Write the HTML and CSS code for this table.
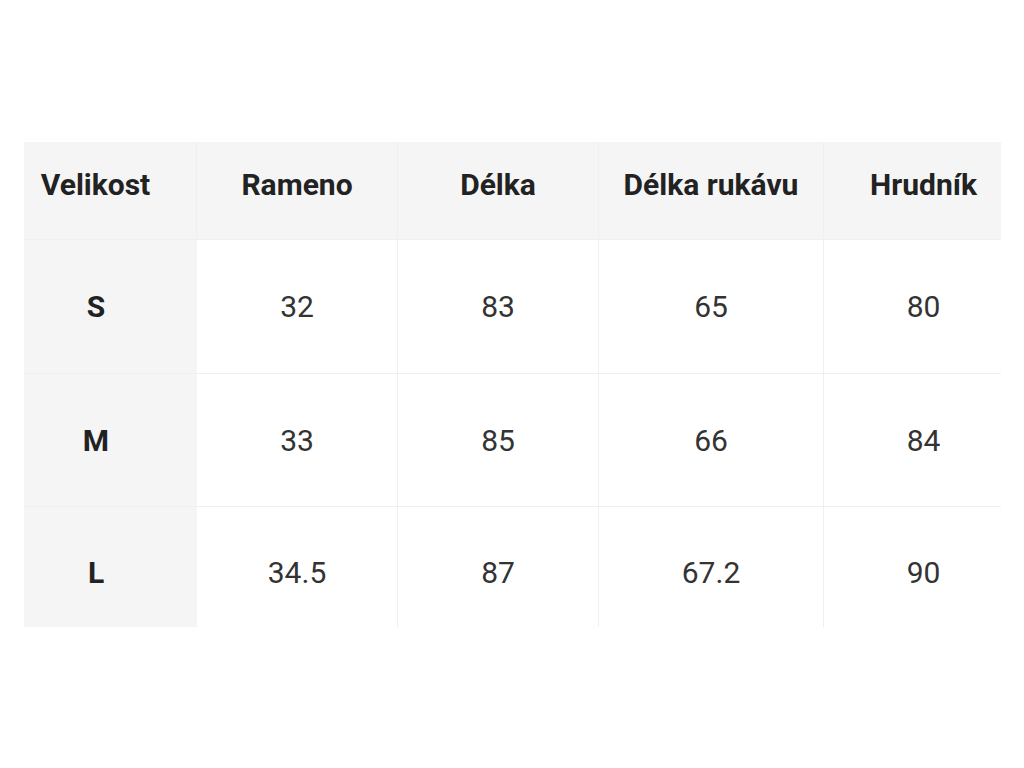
FILE: index.html
```html
<!DOCTYPE html>
<html lang="cs">
<head>
<meta charset="utf-8">
<title>Velikostní tabulka</title>
<link rel="stylesheet" href="styles.css">
</head>
<body>
<div class="frame">
  <div class="size-table">
    <div class="cell head">Velikost</div>
    <div class="cell head">Rameno</div>
    <div class="cell head">Délka</div>
    <div class="cell head">Délka rukávu</div>
    <div class="cell head">Hrudník</div>

    <div class="cell label">S</div>
    <div class="cell">32</div>
    <div class="cell">83</div>
    <div class="cell">65</div>
    <div class="cell">80</div>

    <div class="cell label">M</div>
    <div class="cell">33</div>
    <div class="cell">85</div>
    <div class="cell">66</div>
    <div class="cell">84</div>

    <div class="cell label">L</div>
    <div class="cell">34.5</div>
    <div class="cell">87</div>
    <div class="cell">67.2</div>
    <div class="cell">90</div>
  </div>
</div>
</body>
</html>
```

FILE: styles.css
```css
html, body {
  margin: 0;
  padding: 0;
  background: #ffffff;
}

body {
  font-family: Roboto, "Liberation Sans", sans-serif;
  color: #333333;
}

.frame {
  margin: 142px 0 0 24px;
  width: 977px;
  height: 485px;
  overflow: hidden;
}

.size-table {
  display: grid;
  grid-template-columns: 202px 201px 201px 225px 200px;
  grid-template-rows: 110px 134px 133px 131px;
  margin: -12px 0 0 -29px;
  width: 1029px;
}

.cell {
  box-sizing: border-box;
  display: flex;
  align-items: center;
  justify-content: center;
  font-size: 30px;
  font-weight: 400;
  border-right: 1px solid #efefef;
  border-bottom: 1px solid #efefef;
  background: #ffffff;
}

.head,
.label {
  background: #f5f5f5;
  font-weight: 700;
  color: #222222;
}

.label {
  border-right: none;
}
```
